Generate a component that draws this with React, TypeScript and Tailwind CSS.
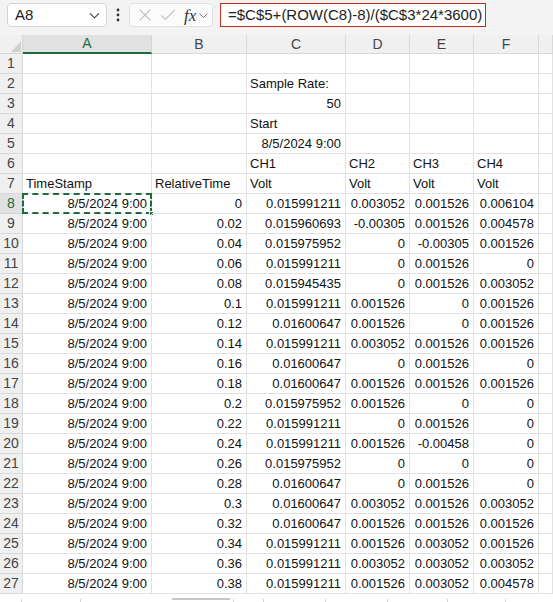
import React from "react";

type Cell = { t: string; a?: "l" | "r" };

const dataRows: string[][] = [
  ["0", "0.015991211", "0.003052", "0.001526", "0.006104"],
  ["0.02", "0.015960693", "-0.00305", "0.001526", "0.004578"],
  ["0.04", "0.015975952", "0", "-0.00305", "0.001526"],
  ["0.06", "0.015991211", "0", "0.001526", "0"],
  ["0.08", "0.015945435", "0", "0.001526", "0.003052"],
  ["0.1", "0.015991211", "0.001526", "0", "0.001526"],
  ["0.12", "0.01600647", "0.001526", "0", "0.001526"],
  ["0.14", "0.015991211", "0.003052", "0.001526", "0.001526"],
  ["0.16", "0.01600647", "0", "0.001526", "0"],
  ["0.18", "0.01600647", "0.001526", "0.001526", "0.001526"],
  ["0.2", "0.015975952", "0.001526", "0", "0"],
  ["0.22", "0.015991211", "0", "0.001526", "0"],
  ["0.24", "0.015991211", "0.001526", "-0.00458", "0"],
  ["0.26", "0.015975952", "0", "0", "0"],
  ["0.28", "0.01600647", "0", "0.001526", "0"],
  ["0.3", "0.01600647", "0.003052", "0.001526", "0.003052"],
  ["0.32", "0.01600647", "0.001526", "0.001526", "0.001526"],
  ["0.34", "0.015991211", "0.001526", "0.003052", "0.001526"],
  ["0.36", "0.015991211", "0.003052", "0.003052", "0.003052"],
  ["0.38", "0.015991211", "0.001526", "0.003052", "0.004578"],
];

const E: Cell = { t: "" };

function buildRows(): Cell[][] {
  const rows: Cell[][] = [];
  const blank = () => [E, E, E, E, E, E, E];
  rows.push(blank()); // 1
  rows.push([E, E, { t: "Sample Rate:", a: "l" }, E, E, E, E]);
  rows.push([E, E, { t: "50", a: "r" }, E, E, E, E]);
  rows.push([E, E, { t: "Start", a: "l" }, E, E, E, E]);
  rows.push([E, E, { t: "8/5/2024 9:00", a: "r" }, E, E, E, E]);
  rows.push([
    E,
    E,
    { t: "CH1", a: "l" },
    { t: "CH2", a: "l" },
    { t: "CH3", a: "l" },
    { t: "CH4", a: "l" },
    E,
  ]);
  rows.push([
    { t: "TimeStamp", a: "l" },
    { t: "RelativeTime", a: "l" },
    { t: "Volt", a: "l" },
    { t: "Volt", a: "l" },
    { t: "Volt", a: "l" },
    { t: "Volt", a: "l" },
    E,
  ]);
  for (const d of dataRows) {
    rows.push([
      { t: "8/5/2024 9:00", a: "r" },
      ...d.map((v) => ({ t: v, a: "r" as const })),
      E,
    ]);
  }
  return rows;
}

const COLS = ["A", "B", "C", "D", "E", "F", ""];

function ChevronDown({ size = 14, color = "#555" }: { size?: number; color?: string }) {
  return (
    <svg width={size} height={size} viewBox="0 0 16 16" fill="none">
      <path d="M3.5 6 L8 10.5 L12.5 6" stroke={color} strokeWidth="1.2" strokeLinecap="round" strokeLinejoin="round" />
    </svg>
  );
}

export default function App() {
  const rows = buildRows();
  return (
    <div
      className="w-[553px] h-[602px] overflow-hidden bg-white text-black"
      style={{ fontFamily: '"Liberation Sans", Arial, sans-serif' }}
    >
      {/* toolbar */}
      <div className="h-[35px] bg-[#f3f3f3] flex items-start pt-[3px] pl-[7px]">
        <div className="w-[100px] h-[24px] bg-white border border-[#d4d4d4] rounded-[4px] flex items-center pl-[7px] pr-[4px] justify-between">
          <span className="text-[15px] text-[#222]">A8</span>
          <ChevronDown size={15} color="#444" />
        </div>
        <div className="w-[22px] h-[24px] flex items-center justify-center">
          <svg width="4" height="14" viewBox="0 0 4 14">
            <circle cx="2" cy="2" r="1.4" fill="#333" />
            <circle cx="2" cy="7" r="1.4" fill="#333" />
            <circle cx="2" cy="12" r="1.4" fill="#333" />
          </svg>
        </div>
        <div className="w-[84px] h-[24px] bg-[#fbfbfb] border border-[#e0e0e0] rounded-[4px] flex items-center pl-[4px]">
          <div className="w-[22px] flex justify-center">
            <svg width="14" height="14" viewBox="0 0 14 14">
              <path d="M1.5 1.5 L12.5 12.5 M12.5 1.5 L1.5 12.5" stroke="#c4c4c4" strokeWidth="1.1" />
            </svg>
          </div>
          <div className="w-[24px] flex justify-center">
            <svg width="16" height="14" viewBox="0 0 16 14">
              <path d="M1.5 7.5 L5.5 11.5 L14.5 2" stroke="#c4c4c4" strokeWidth="1.1" fill="none" />
            </svg>
          </div>
          <span
            className="text-[17px] italic text-[#333] leading-none ml-[4px]"
            style={{ fontFamily: '"Liberation Serif", "Times New Roman", serif' }}
          >
            fx
          </span>
          <div className="ml-[1px]">
            <ChevronDown size={13} color="#777" />
          </div>
        </div>
        <div className="ml-[7px] w-[266px] h-[24px] bg-white border border-[#c42b1c] flex items-center pl-[7px]">
          <span className="text-[15px] text-[#222] whitespace-nowrap">=$C$5+(ROW(C8)-8)/($C$3*24*3600)</span>
        </div>
      </div>

      {/* grid */}
      <div className="grid grid-cols-[23px_129px_95px_99px_64px_64px_65px_1fr]">
        {/* header row */}
        <div className="h-[19px] bg-[#f0f0f0] border-r border-b border-[#d4d4d4] flex items-end justify-end pr-[1px] pb-[1px]">
          <svg width="10" height="11" viewBox="0 0 10 11">
            <polygon points="10,0 10,11 0,11" fill="#d0d0d0" />
          </svg>
        </div>
        {COLS.map((c, i) =>
          i === 0 ? (
            <div
              key={i}
              className="h-[19px] bg-[#e1e1e1] border-r border-[#d4d4d4] border-b-2 border-b-[#1e6b41] flex items-center justify-center text-[14px] text-[#1e6b41]"
            >
              {c}
            </div>
          ) : (
            <div
              key={i}
              className="h-[19px] bg-[#f0f0f0] border-r border-b border-[#d9d9d9] flex items-center justify-center text-[14px] text-[#444]"
            >
              {c}
            </div>
          )
        )}
        {rows.map((r, ri) => {
          const rowNum = ri + 1;
          const sel = rowNum === 8;
          return (
            <React.Fragment key={ri}>
              <div
                className={
                  sel
                    ? "h-[20px] bg-[#e1e1e1] border-r border-b border-[#d4d4d4] flex items-center justify-center text-[14px] text-[#1e6b41]"
                    : "h-[20px] bg-[#f0f0f0] border-r border-b border-[#d9d9d9] flex items-center justify-center text-[14px] text-[#444]"
                }
              >
                {rowNum}
              </div>
              {r.map((cell, ci) => {
                const isSel = sel && ci === 0;
                return (
                  <div
                    key={ci}
                    className={
                      "relative h-[20px] border-r border-b border-[#e1e1e1] flex items-center text-[13px] text-[#111] whitespace-nowrap " +
                      (cell.a === "r" ? "justify-end pr-[4px]" : "justify-start pl-[3px]")
                    }
                  >
                    {cell.t}
                    {isSel && (
                      <>
                        <div className="absolute left-[-1px] top-[-1px] right-[-1px] bottom-[-1px] border-2 border-dashed border-[#1e6b41]" />
                        <div className="absolute right-[-3px] bottom-[-3px] w-[5px] h-[5px] bg-[#1e6b41] border border-white" />
                      </>
                    )}
                  </div>
                );
              })}
            </React.Fragment>
          );
        })}
      </div>

      {/* bottom strip */}
      <div className="h-[8px] bg-white flex items-end">
        <div className="w-[21px] h-[3px]" />
        <div className="w-[59px] h-[3px] border-l border-[#d0d0d0]" />
        <div className="w-[90px] h-[3px] border-l border-[#d0d0d0]" />
        <div className="w-[2px] h-[3px]" />
        <div className="w-[58px] h-[8px] flex flex-col">
          <div className="h-[2px] bg-[#c8c8c8] mt-[4px]" />
        </div>
        <div className="w-[3px] h-[3px]" />
        <div className="w-[30px] h-[3px] border-l border-[#d0d0d0]" />
        <div className="w-[62px] h-[3px] border-l border-[#d0d0d0]" />
        <div className="w-[62px] h-[3px] border-l border-[#d0d0d0]" />
        <div className="w-[60px] h-[3px] border-l border-[#d0d0d0]" />
        <div className="w-[58px] h-[3px] border-l border-[#d0d0d0]" />
        <div className="flex-1 h-[3px] border-l border-[#d0d0d0]" />
      </div>
    </div>
  );
}
